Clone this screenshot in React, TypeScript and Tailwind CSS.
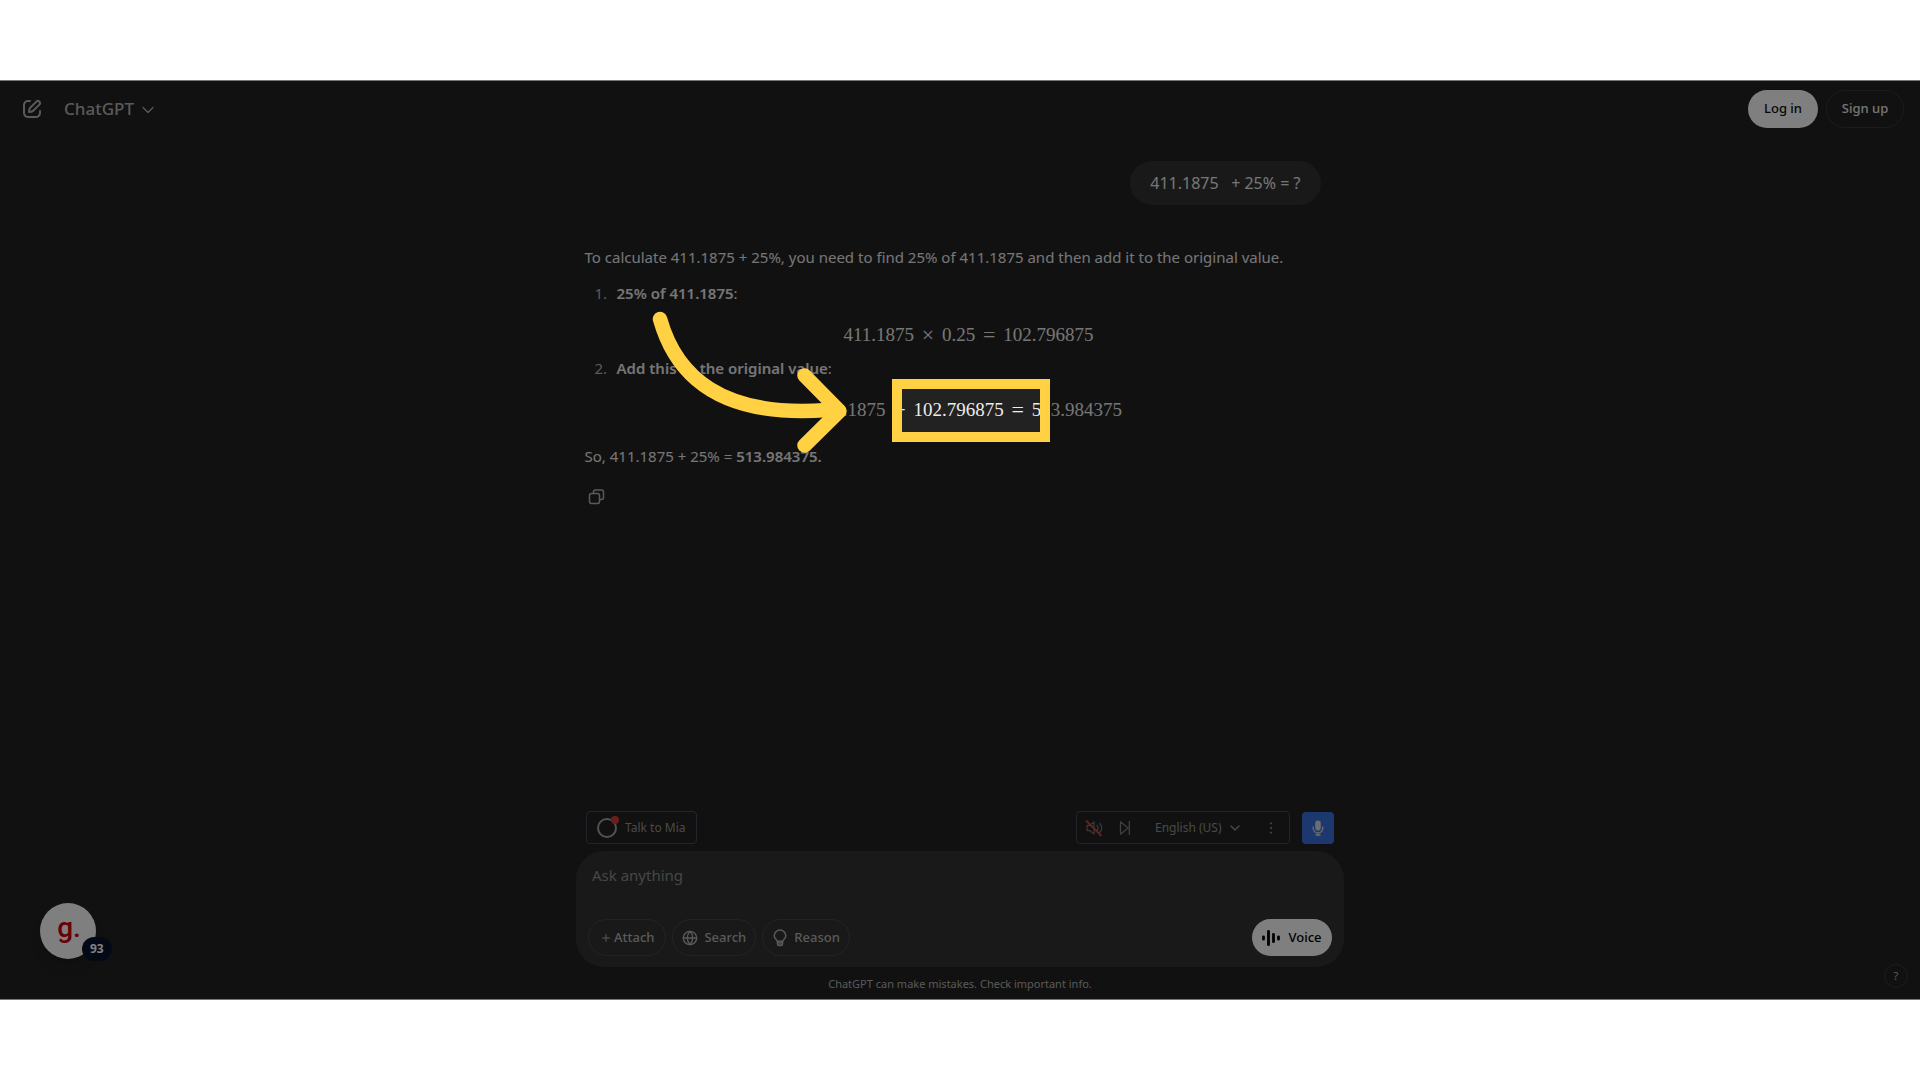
import { ChevronDown, EllipsisVertical, Globe, Plus } from "lucide-react";

function NewChatIcon() {
  return (
    <svg viewBox="0 0 24 24" className="size-6" fill="currentColor">
      <path d="M15.673 3.913a3.121 3.121 0 1 1 4.414 4.414l-5.937 5.937a5 5 0 0 1-2.828 1.415l-2.18.31a1 1 0 0 1-1.132-1.13l.311-2.18A5 5 0 0 1 9.736 9.85l5.937-5.937Zm3 1.414a1.121 1.121 0 0 0-1.586 0l-5.937 5.937a3 3 0 0 0-.849 1.697l-.123.86.86-.122a3 3 0 0 0 1.698-.849l5.937-5.937a1.121 1.121 0 0 0 0-1.586ZM11 4a1 1 0 0 1-1 1c-.998 0-1.702.008-2.253.06-.54.052-.862.141-1.109.267a3 3 0 0 0-1.311 1.311c-.134.263-.226.611-.276 1.216C5.001 8.471 5 9.263 5 10.4v3.2c0 1.137.001 1.929.051 2.546.05.605.142.953.276 1.216a3 3 0 0 0 1.311 1.311c.263.134.611.226 1.216.276.617.05 1.41.051 2.546.051h3.2c1.137 0 1.929-.001 2.546-.051.605-.05.953-.142 1.216-.276a3 3 0 0 0 1.311-1.311c.126-.247.215-.569.266-1.108.053-.552.06-1.256.06-2.255a1 1 0 1 1 2 .002c0 .978-.006 1.78-.069 2.442-.064.673-.192 1.27-.475 1.827a5 5 0 0 1-2.185 2.185c-.592.302-1.232.428-1.961.487C15.6 21 14.727 21 13.643 21h-3.286c-1.084 0-1.958 0-2.666-.058-.728-.06-1.369-.185-1.96-.487a5 5 0 0 1-2.186-2.185c-.302-.592-.428-1.233-.487-1.961C3 15.6 3 14.727 3 13.643v-3.286c0-1.084 0-1.958.058-2.666.06-.729.185-1.369.487-1.961A5 5 0 0 1 5.73 3.545c.556-.284 1.154-.411 1.827-.475C8.22 3.007 9.021 3 9.999 3A1 1 0 0 1 11 4Z" />
    </svg>
  );
}

function CopyIcon() {
  return (
    <svg viewBox="0 0 18 18" className="size-[18px]" fill="none" stroke="currentColor" strokeWidth="1.5">
      <rect x="1.500" y="5.500" width="10" height="10" rx="2" />
      <path d="M5.500 5.500V4a2 2 0 0 1 2-2h6a2 2 0 0 1 2 2v5.500a2 2 0 0 1-2 2h-2" />
    </svg>
  );
}

function BulbIcon() {
  return (
    <svg viewBox="0 0 16 18" className="h-[18px] w-4" fill="none" stroke="currentColor" strokeWidth="1.5">
      <path d="M5.500 12.500C5.300 11 2.200 10 2.200 6.800a5.800 5.800 0 0 1 11.600 0C13.800 10 10.700 11 10.500 12.500Z" />
      <path d="M5.500 12.500h5V15a1.600 1.600 0 0 1-1.600 1.600H7.100A1.600 1.600 0 0 1 5.500 15Z" fill="currentColor" fillOpacity="0.6" />
    </svg>
  );
}

function MutedIcon() {
  return (
    <svg viewBox="0 0 18 18" className="size-[18px]" fill="none">
      <g stroke="#6f6f78" strokeWidth="1.3" strokeLinejoin="round" strokeLinecap="round">
        <path d="M2 6.500h2.500L9 3v12l-4.500-3.500H2Z" />
        <path d="M12 6.500a3.500 3.500 0 0 1 0 5M14.500 4.500c3 2 3 7 0 9" />
      </g>
      <path d="M1 1.500 16.500 17" stroke="#c74848" strokeWidth="1.800" />
    </svg>
  );
}

function SkipIcon() {
  return (
    <svg viewBox="0 0 12 16" className="h-4 w-3" fill="none" stroke="#7c7c86" strokeWidth="1.3" strokeLinejoin="round">
      <path d="M1.500 1.800v12.400L9 8ZM10.300 1v14" />
    </svg>
  );
}

function MicIcon() {
  return (
    <svg viewBox="0 0 12 16" className="h-4 w-3" fill="none" stroke="currentColor">
      <rect x="3.200" y="0.500" width="5.600" height="10" rx="2.800" fill="currentColor" stroke="none" />
      <path d="M1.200 6.500v1.700a4.800 4.800 0 0 0 9.600 0V6.500M6 13v2M3.500 15h5" strokeWidth="1.300" />
    </svg>
  );
}

function VoiceIcon() {
  return (
    <svg viewBox="0 0 18 18" className="size-[18px]" stroke="currentColor" strokeWidth="2.800" strokeLinecap="round">
      <path d="M1.500 7.800v2.400M6.500 2.300v13.400M11.500 5.300v7.400M16.500 7.800v2.400" />
    </svg>
  );
}

function Arrow() {
  return (
    <svg
      viewBox="0 0 200 160"
      className="absolute top-40 left-[67px] h-[160px] w-[200px]"
      fill="none"
      stroke="#ffd143"
      strokeWidth="14.500"
      strokeLinecap="round"
      strokeLinejoin="round"
    >
      <path d="M8 22C24 79 69 121 175 113" />
      <path d="M152.500 78.500 187.500 114l-35 34.500" />
      <path d="M176 105v17l8-8Z" fill="#ffd143" strokeWidth="3" />
    </svg>
  );
}

function Operator({ children }: { children: string }) {
  return <span className="w-4 text-center text-[22px]">{children}</span>;
}

const pill =
  "flex h-[37px] items-center rounded-full border border-white/10 text-[13px] font-medium text-[#b4b4b4]";
const equation = "mt-3.5 mb-[5px] flex justify-center gap-1.5 font-['Liberation_Serif',serif] text-[19px]";
const marker = "-ml-[22px] inline-block w-[22px] text-[#b4b4b4]";

export default function App() {
  return (
    <div className="flex min-h-screen flex-col bg-white py-20 font-['Noto_Sans','Open_Sans',sans-serif]">
      <div className="relative flex flex-1 flex-col overflow-hidden border-y border-[#777] bg-[#222] text-[#ececec]">
        <header className="flex h-14 items-center justify-between pr-4 pl-5">
          <div className="flex items-center gap-5">
            <button aria-label="New chat" className="text-[#b4b4b4]">
              <NewChatIcon />
            </button>
            <button className="flex items-center gap-1 text-[17px] font-medium text-[#b4b4b4]">
              ChatGPT
              <ChevronDown className="mt-px size-5" strokeWidth={1.5} />
            </button>
          </div>
          <div className="flex items-center gap-2">
            <button className="h-[38px] w-[70px] rounded-full bg-white text-[13px] font-medium text-[#0d0d0d]">
              Log in
            </button>
            <button className="h-[38px] w-[78px] rounded-full border border-white/10 text-[13px] font-medium">
              Sign up
            </button>
          </div>
        </header>

        <main className="flex-1 pr-[15px] text-[15px]">
          <div className="relative mx-auto w-[736px] pt-6">
            <div className="ml-auto w-fit rounded-3xl bg-[#323232] px-5 py-2.5 text-base leading-6 whitespace-pre">
              411.1875{"   "}+ 25% = ?
            </div>

            <p className="mt-[38px] leading-7">
              To calculate 411.1875 + 25%, you need to find 25% of 411.1875 and then add it to the original value.
            </p>
            <ol className="mt-2 pl-8 leading-7">
              <li>
                <span className={marker}>1.</span>
                <strong className="font-semibold">25% of 411.1875</strong>:
                <p className={equation}>
                  <span>411.1875</span>
                  <Operator>×</Operator>
                  <span>0.25</span>
                  <Operator>=</Operator>
                  <span>102.796875</span>
                </p>
              </li>
              <li>
                <span className={marker}>2.</span>
                <strong className="font-semibold">Add this to the original value</strong>:
                <p className={equation}>
                  <span>411.1875</span>
                  <Operator>+</Operator>
                  <span>102.796875</span>
                  <Operator>=</Operator>
                  <span>513.984375</span>
                </p>
              </li>
            </ol>
            <p className="mt-[18px] leading-7">
              So, 411.1875 + 25% = <strong className="font-semibold">513.984375.</strong>
            </p>
            <button aria-label="Copy" className="mt-[18px] ml-[3px] text-[#b4b4b4]">
              <CopyIcon />
            </button>

            {/* guide step: everything outside the box is dimmed */}
            <div className="absolute top-[252px] left-[317px] z-20 h-[43px] w-[138px] shadow-[0_0_0_9999px_rgba(0,0,0,0.5)] outline-10 outline-[#ffd143]" />
            <div className="pointer-events-none absolute inset-0 z-30">
              <Arrow />
            </div>
          </div>
        </main>

        <footer className="mx-auto w-[768px]">
          <div className="mb-[7px] flex items-center justify-between px-2.5 text-xs text-[#949494]">
            <button className="flex h-[33px] items-center gap-2 rounded border border-[#48485a] px-2.5">
              <span className="relative size-5 rounded-full border-2 border-[#a4a4a4]">
                <span className="absolute -top-1 -right-1 size-2 rounded-full bg-[#d93a3a]" />
              </span>
              Talk to Mia
            </button>
            <div className="flex items-center gap-3">
              <div className="flex h-[33px] w-[214px] items-center gap-4 rounded border border-[#48485a] px-2">
                <button aria-label="Mute">
                  <MutedIcon />
                </button>
                <button aria-label="Skip">
                  <SkipIcon />
                </button>
                <label className="relative ml-2 flex items-center">
                  <select aria-label="Language" className="w-[88px] appearance-none bg-transparent">
                    <option>English (US)</option>
                  </select>
                  <ChevronDown className="pointer-events-none absolute right-0 size-4" />
                </label>
                <button aria-label="More" className="mr-0.5 ml-auto">
                  <EllipsisVertical className="size-4" strokeWidth={1.5} />
                </button>
              </div>
              <button
                aria-label="Record"
                className="flex size-8 items-center justify-center rounded bg-[#3a71dc] text-[#dcdcdc]"
              >
                <MicIcon />
              </button>
            </div>
          </div>

          <div className="flex h-[116px] flex-col justify-between rounded-[28px] bg-[#323232] px-3 py-[11px]">
            <textarea
              aria-label="Message"
              rows={1}
              placeholder="Ask anything"
              className="h-7 w-full resize-none bg-transparent px-1 text-[15px] leading-[26px] placeholder:text-[#8e8e8e]"
            />
            <div className="flex gap-1.5">
              <button className={`${pill} gap-0.5 px-[11px]`}>
                <Plus className="size-3" />
                Attach
              </button>
              <button className={`${pill} gap-1.5 px-[9px]`}>
                <Globe className="size-4" strokeWidth={2} />
                Search
              </button>
              <button className={`${pill} gap-1.5 px-[9px]`}>
                <BulbIcon />
                Reason
              </button>
              <button className="ml-auto flex h-[37px] w-20 items-center justify-center gap-2 rounded-full bg-white text-[13px] font-medium text-black">
                <VoiceIcon />
                Voice
              </button>
            </div>
          </div>
          <p className="pt-px text-center text-[11px] leading-[31px] text-[#b4b4b4]">
            ChatGPT can make mistakes. Check important info.
          </p>
        </footer>

        <a
          href="#"
          className="absolute bottom-10 left-10 flex size-14 items-center justify-center rounded-full bg-white shadow-lg"
        >
          <span className="pb-1.5 pl-0.5 font-['Roboto',sans-serif] text-[28px] font-medium text-[#d0000c]">g.</span>
          <span className="absolute top-[34px] left-[42px] rounded-full bg-[#08142a] px-2 text-xs leading-6 font-bold text-white">
            93
          </span>
        </a>
        <button className="absolute right-3 bottom-[11px] size-6 rounded-full border border-white/10 text-[11px] text-[#b4b4b4]">
          ?
        </button>
      </div>
    </div>
  );
}
